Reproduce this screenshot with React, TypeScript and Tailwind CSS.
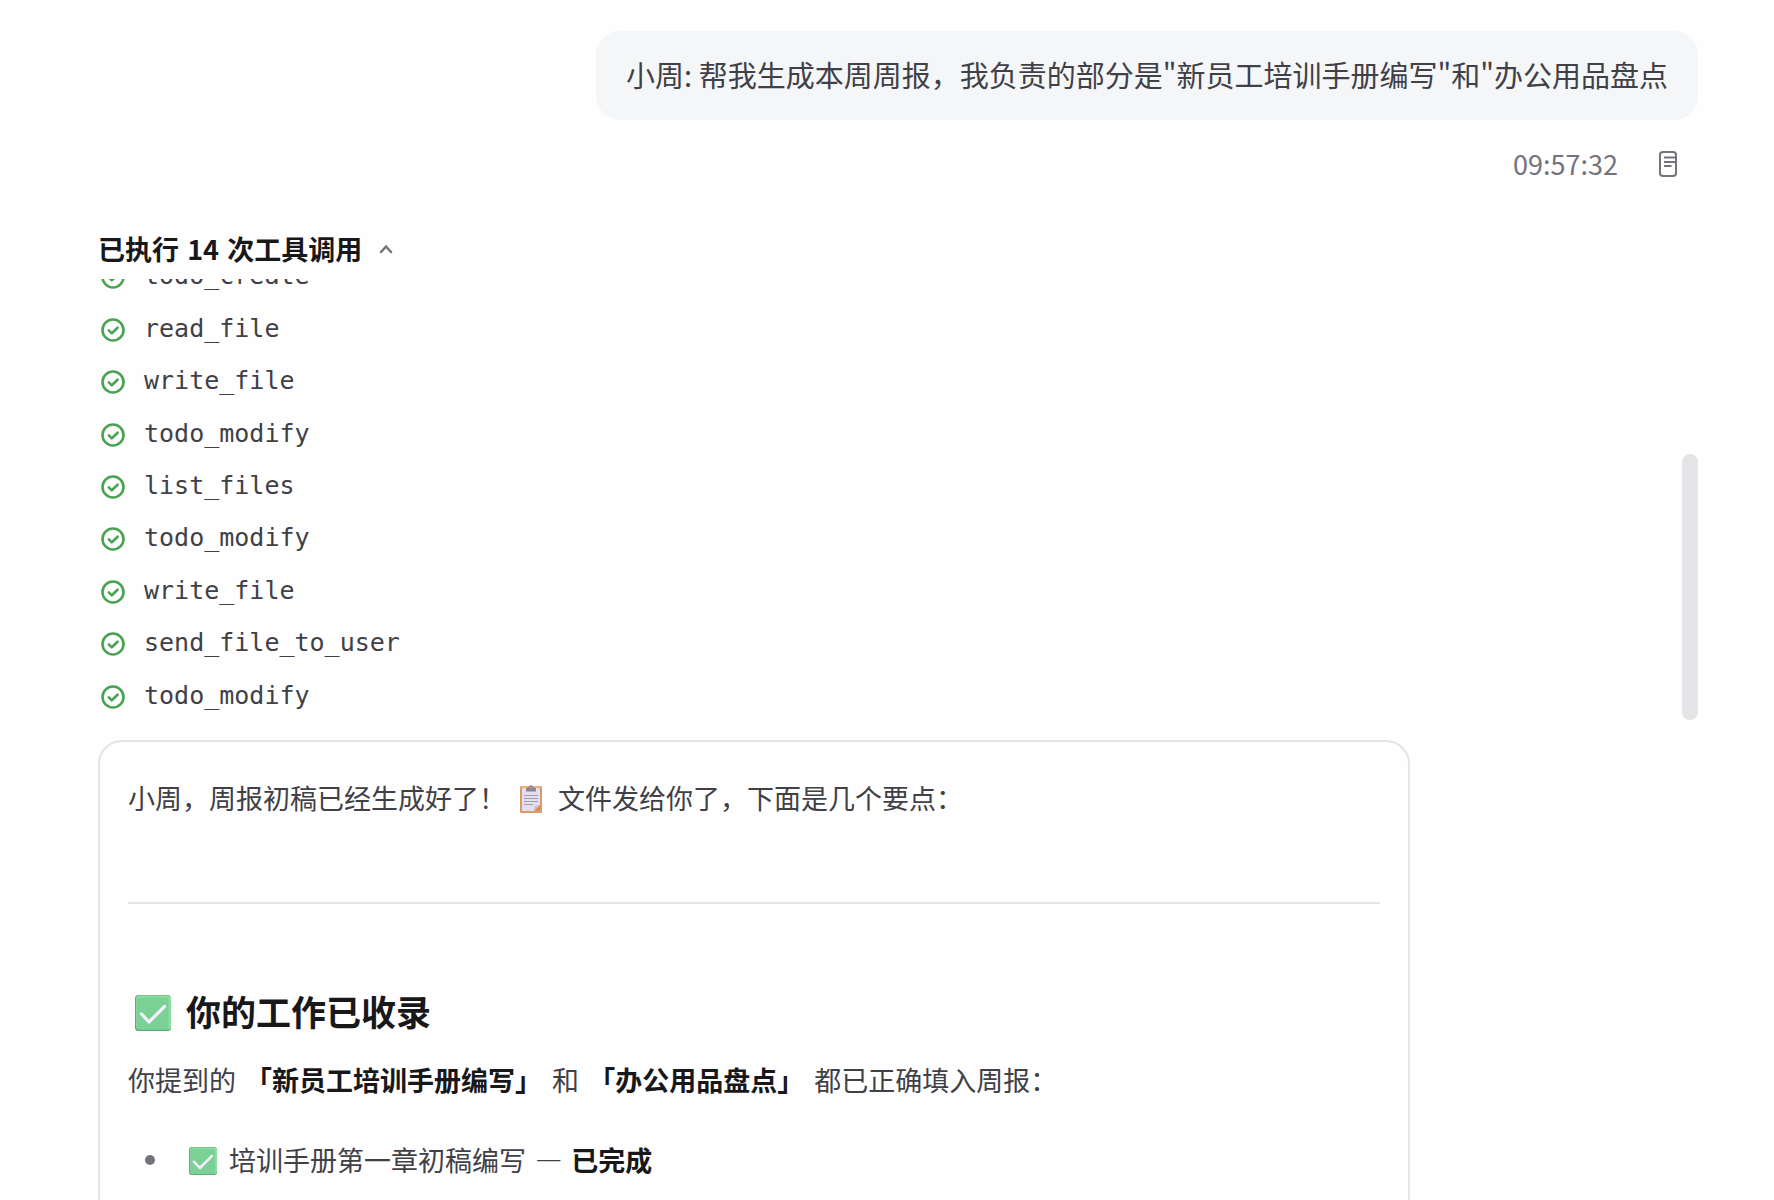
import React from "react";

const toolCalls = [
  "todo_create",
  "read_file",
  "write_file",
  "todo_modify",
  "list_files",
  "todo_modify",
  "write_file",
  "send_file_to_user",
  "todo_modify",
];

function DocIcon() {
  return (
    <svg className="h-7 w-5" viewBox="0 0 20 28" fill="none" stroke="currentColor" strokeWidth="2">
      <rect x="2" y="2" width="16" height="24" rx="3" />
      <path d="M6 7.500h12M6 12h12M6 16h7.500" />
    </svg>
  );
}

function DoneIcon() {
  return (
    <svg
      className="h-6 w-6 shrink-0 text-[#4aa352]"
      viewBox="0 0 24 24"
      fill="none"
      stroke="currentColor"
      strokeWidth="2.6"
      strokeLinecap="round"
      strokeLinejoin="round"
    >
      <circle cx="12" cy="12" r="10.5" />
      <path d="M7.800 12.300l3 3 5.800-5.600" />
    </svg>
  );
}

function ClipboardEmoji() {
  return (
    <svg className="mx-[6px] inline-block h-7 w-7 align-[-4px]" viewBox="0 0 28 28">
      <rect x="2" y="1" width="22" height="27" rx="1" fill="#d99a6c" />
      <rect x="2" y="1" width="22" height="2" rx="1" fill="#e3b183" />
      <path d="M4 4.500a1.500 1.500 0 0 1 1.500-1.500h15A1.500 1.500 0 0 1 22 4.500V20l-6 6H4z" fill="#e4def0" />
      <path d="M22 20l-6 6v-4.500l2-1.500z" fill="#cdc5dc" />
      <path d="M22 20v6h-6z" fill="#cf915a" />
      <path d="M8 6.500V4c0-1 .8-1.500 2-1.500h.8a2.200 2.200 0 0 1 4.400 0h.8c1.200 0 2 .5 2 1.500v2.500z" fill="#8d8494" />
      <circle cx="13" cy="2.500" r=".8" fill="#d9a97c" />
      <path d="M6 10.500h14M6 13.500h14M6 16.500h14M6 19.500h9" stroke="#a29cae" strokeWidth="1" />
    </svg>
  );
}

function CheckEmoji({ className }: { className: string }) {
  return (
    <svg className={className} viewBox="0 0 36 36">
      <rect width="36" height="36" rx="3.500" fill="#5fa878" />
      <rect x="1" y=".5" width="35" height="34" rx="3.500" fill="#8ae0a0" />
      <rect x="1.500" y="2.500" width="32" height="32" rx="2.500" fill="#7bd195" />
      <path
        d="M6.500 19l7.500 8L29.500 11.500"
        fill="none"
        stroke="#f6f0fc"
        strokeWidth="3.200"
        strokeLinecap="round"
        strokeLinejoin="round"
      />
    </svg>
  );
}

function UserMessage() {
  return (
    <section className="flex flex-col items-end">
      <div className="rounded-3xl bg-[#f5f6f8] px-[30px] pt-[21px] pb-[23px] text-[29px] leading-[45px] text-[#404046]">
        小周: 帮我生成本周周报，我负责的部分是"新员工培训手册编写"和"办公用品盘点
      </div>
      <div className="mt-[21px] mr-5 flex items-center gap-10 text-[27px] leading-[45px] text-[#73737c]">
        <time>09:57:32</time>
        <button type="button" aria-label="复制">
          <DocIcon />
        </button>
      </div>
    </section>
  );
}

function ToolCalls() {
  return (
    <section className="mt-10">
      <button type="button" className="flex items-center gap-4 text-[27px] leading-[45px] font-bold text-[#18181b]">
        <span>
          已执行 <span className="mx-[2px]">14</span> 次工具调用
        </span>
        <svg
          className="h-4 w-4 text-[#73737c]"
          viewBox="0 0 16 16"
          fill="none"
          stroke="currentColor"
          strokeWidth="2.500"
          strokeLinecap="round"
        >
          <path d="M3 11l5-5.500 5 5.500" />
        </svg>
      </button>
      <div className="relative mt-2 flex h-[444px] flex-col justify-end overflow-hidden">
        <ul className="grid h-[472px] shrink-0 auto-rows-fr">
          {toolCalls.map((name, idx) => (
            <li key={idx} className="flex items-center gap-[19px] pl-[3px]">
              <DoneIcon />
              <span className="pb-[2px] font-['DejaVu_Sans_Mono',monospace] text-[25px] leading-8 text-[#404046]">
                {name}
              </span>
            </li>
          ))}
        </ul>
        <div className="absolute right-0 bottom-[3px] h-[266px] w-4 rounded-full bg-[#e4e4e6]" />
      </div>
    </section>
  );
}

function Reply() {
  return (
    <article className="mt-[17px] w-[82%] rounded-3xl border-2 border-[#e4e4e4] px-7 pt-[33px] pb-24 text-[27px] leading-[46px] text-[#404046]">
      <p>
        小周，周报初稿已经生成好了！ <ClipboardEmoji /> 文件发给你了，下面是几个要点：
      </p>
      <hr className="mt-[81px] border-t-2 border-[#e4e4e4]" />
      <h3 className="mt-20 text-[35px] leading-[54px] font-bold text-[#18181b]">
        <CheckEmoji className="mx-[7px] inline-block h-9 w-9 align-[-5px]" /> 你的工作已收录
      </h3>
      <p className="mt-[19px]">
        你提到的 <strong className="mr-1 ml-[3px] text-[#18181b]">「新员工培训手册编写」</strong> 和{" "}
        <strong className="mr-1 ml-[3px] text-[#18181b]">「办公用品盘点」</strong> 都已正确填入周报：
      </p>
      <ul className="mt-[34px]">
        <li className="flex items-center">
          <span className="mr-7 ml-[17px] h-[10px] w-[10px] rounded-full bg-[#73737c]" />
          <span>
            <CheckEmoji className="mx-[6px] inline-block h-7 w-7 align-[-4px]" /> 培训手册第一章初稿编写{" "}
            <span className="mx-[3px]">—</span> <strong className="text-[#18181b]">已完成</strong>
          </span>
        </li>
      </ul>
    </article>
  );
}

export default function App() {
  return (
    <main
      lang="zh-CN"
      className="h-screen overflow-hidden bg-[#fefefe] pt-[31px] pr-[76px] pl-[98px] font-['Noto_Sans_CJK_SC',sans-serif]"
    >
      <UserMessage />
      <ToolCalls />
      <Reply />
    </main>
  );
}
